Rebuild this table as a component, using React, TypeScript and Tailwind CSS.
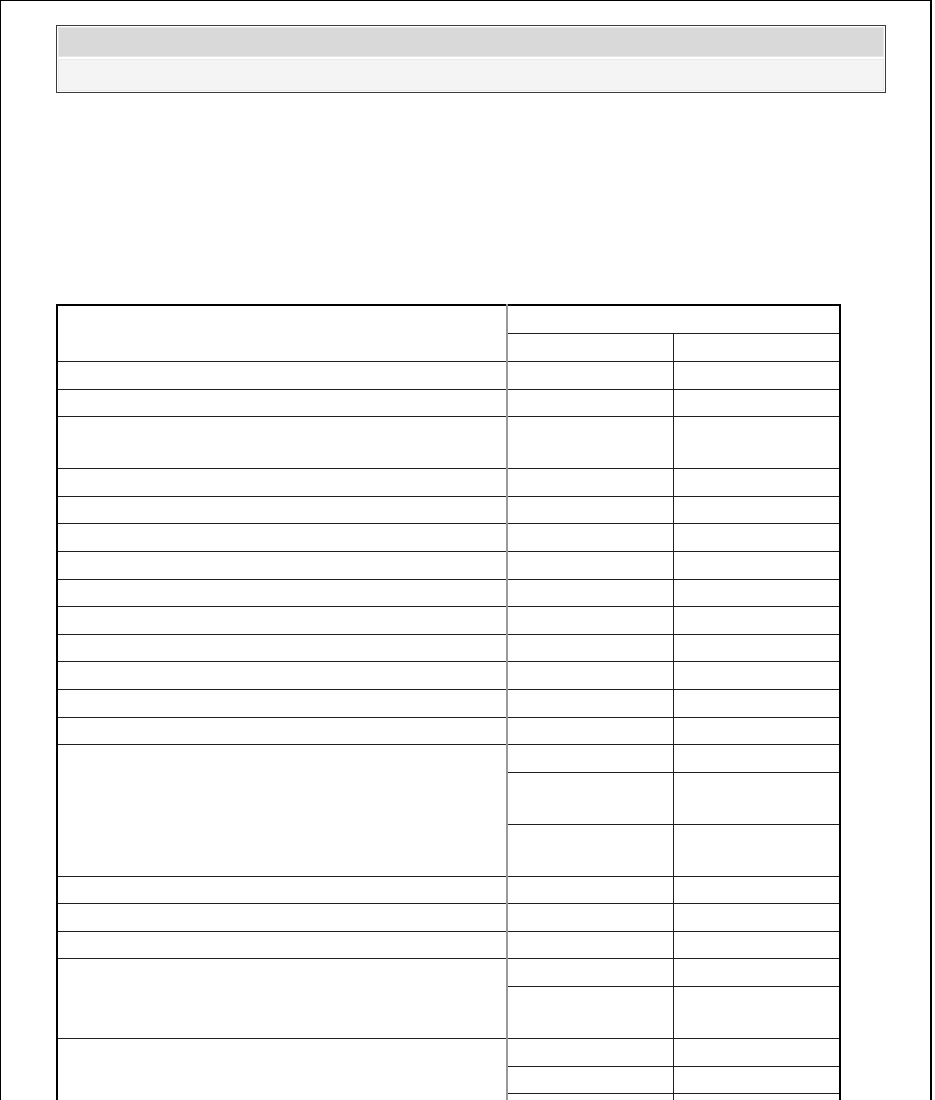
const cell = 'border border-[#1e1e1e] p-0';
const first = 'border border-[#1e1e1e] border-r-2 border-r-[#9a9a9a] p-0';

type Row = { h: string; span?: number; skipFirst?: boolean };

// row heights follow the reference line positions
const rows: Row[] = [
  { h: 'h-[28px]' },
  { h: 'h-[27px]' },
  { h: 'h-[52px]' },
  { h: 'h-[28px]' },
  { h: 'h-[27px]' },
  { h: 'h-[28px]' },
  { h: 'h-[28px]' },
  { h: 'h-[27px]' },
  { h: 'h-[28px]' },
  { h: 'h-[27px]' },
  { h: 'h-[28px]' },
  { h: 'h-[28px]' },
  { h: 'h-[27px]' },
  { h: 'h-[28px]', span: 3 },
  { h: 'h-[52px]', skipFirst: true },
  { h: 'h-[52px]', skipFirst: true },
  { h: 'h-[27px]' },
  { h: 'h-[28px]' },
  { h: 'h-[27px]' },
  { h: 'h-[28px]', span: 2 },
  { h: 'h-[52px]', skipFirst: true },
  { h: 'h-[28px]', span: 4 },
  { h: 'h-[27px]', skipFirst: true },
  { h: 'h-[28px]', skipFirst: true },
  { h: 'h-[28px]', skipFirst: true },
];

const App = () => {
  return (
    <div className="w-[935px] h-[1100px] overflow-hidden bg-white font-['Liberation_Sans',Arial,sans-serif] text-[13px]">
      <div className="w-[932px] h-[1100px] border-l border-t border-r-2 border-black">
        <div className="ml-[55px] mt-[24px] w-[830px] border border-[#3a3a3a] p-[1px] flex flex-col gap-[2px]">
          <div className="h-[30px] bg-[#d9d9d9] border border-[#e6e6e6]" />
          <div className="h-[32px] bg-[#f4f4f4] border border-[#e9e9e9]" />
        </div>

        <table className="ml-[55px] mt-[211px] w-[783px] table-fixed border-collapse border-2 border-black">
          <colgroup>
            <col className="w-[450px]" />
            <col className="w-[166px]" />
            <col className="w-[167px]" />
          </colgroup>
          <tbody>
            <tr className="h-[28px]">
              <td rowSpan={2} className={first}></td>
              <td colSpan={2} className={cell}></td>
            </tr>
            <tr className="h-[28px]">
              <td className={cell}></td>
              <td className={cell}></td>
            </tr>
            {rows.map((r, i) => (
              <tr key={i} className={r.h}>
                {!r.skipFirst && <td rowSpan={r.span} className={first}></td>}
                <td className={cell}></td>
                <td className={cell}></td>
              </tr>
            ))}
          </tbody>
        </table>
      </div>
    </div>
  );
};

export default App;
